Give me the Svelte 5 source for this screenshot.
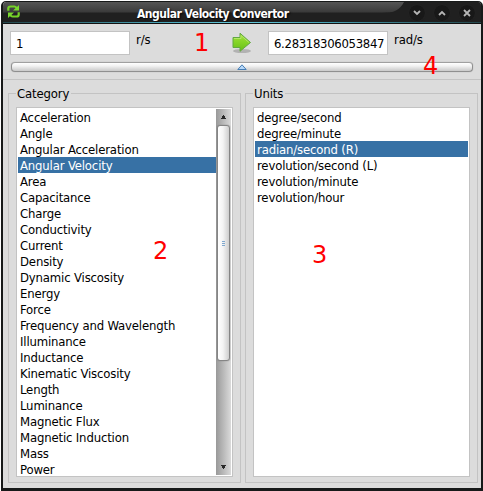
<script>
  const categories = ['Acceleration', 'Angle', 'Angular Acceleration', 'Angular Velocity', 'Area', 'Capacitance', 'Charge', 'Conductivity', 'Current', 'Density', 'Dynamic Viscosity', 'Energy', 'Force', 'Frequency and Wavelength', 'Illuminance', 'Inductance', 'Kinematic Viscosity', 'Length', 'Luminance', 'Magnetic Flux', 'Magnetic Induction', 'Mass', 'Power'];
  const units = ['degree/second', 'degree/minute', 'radian/second (R)', 'revolution/second (L)', 'revolution/minute', 'revolution/hour'];
  let category = $state('Angular Velocity');
  let unit = $state('radian/second (R)');
</script>

<div class="desktop">
  <main class="window">
    <header class="titlebar">
      <svg class="logo" width="13" height="13" viewBox="0 0 13 13" fill="none" stroke="#74d127" stroke-width="2.2">
        <path d="M1.3 5.8V3.6Q1.3 1.5 3.5 1.5H7.5Q9 1.5 9.5 3.3" />
        <path d="M6 5.5H12V0Z" fill="#79d82f" stroke="none" />
        <path d="M11.7 7.2V9.4Q11.7 11.5 9.5 11.5H5.5Q4 11.5 3.5 9.7" />
        <path d="M7 7.5H1V13Z" fill="#79d82f" stroke="none" />
      </svg>
      <h1>Angular Velocity Convertor</h1>
      <div class="controls">
        <svg class="shelf" width="100" height="20" viewBox="0 0 100 20"><path d="M22 0C18 8 12 11 0 11V20H100V0Z" fill="#202020" /></svg>
        <button aria-label="Minimize"><svg width="8" height="8" viewBox="0 0 8 8"><path d="M1 2L4 5L7 2" /></svg></button>
        <button aria-label="Maximize"><svg width="8" height="8" viewBox="0 0 8 8"><path d="M1 6L4 3L7 6" /></svg></button>
        <button aria-label="Close"><svg width="8" height="8" viewBox="0 0 8 8"><path d="M1 1L7 7M7 1L1 7" /></svg></button>
      </div>
    </header>

    <section class="converter">
      <div class="fields">
        <div class="field">1</div>
        <span class="suffix from">r/s</span>
        <span class="mark one">1</span>
        <svg class="arrow" width="22" height="22" viewBox="0 0 22 22">
          <defs><linearGradient id="green" x2="0" y2="1"><stop stop-color="#a7e23d" /><stop offset=".5" stop-color="#83d426" /><stop offset="1" stop-color="#69bd18" /></linearGradient></defs>
          <ellipse cx="11" cy="19" rx="9" ry="2" fill="#888" opacity=".5" />
          <path d="M2 5.5H9V1.2L19.5 10.5L9 19.3V15.5H2Z" fill="url(#green)" stroke="#62a842" stroke-linejoin="round" />
          <path d="M3 6.5H10V3.5L18 10.5" fill="none" stroke="#b5e766" />
        </svg>
        <div class="field result">6.28318306053847</div>
        <span class="suffix to">rad/s</span>
      </div>
      <div class="slider">
        <svg width="10" height="6" viewBox="0 0 10 6"><path d="M.8 5.5L5 .8L9.2 5.5Z" fill="#b7d8f8" stroke="#477eb5" /></svg>
        <span class="mark four">4</span>
      </div>
    </section>

    <section class="panels">
      <fieldset>
        <h2>Category</h2>
        <div class="list">
          <div class="rows">
            {#each categories as item}
              <button class="row" class:selected={item === category} onclick={() => (category = item)}>{item}</button>
            {/each}
          </div>
          <div class="scrollbar">
            <svg class="up" width="5" height="4" viewBox="0 0 5 4"><path d="M2 0H3V1H4V3H5V4H0V3H1V1H2Z" /></svg>
            <div class="thumb"><i></i><i></i><i></i></div>
            <svg class="down" width="5" height="4" viewBox="0 0 5 4"><path d="M0 0H5V1H4V3H3V4H2V3H1V1H0Z" /></svg>
          </div>
        </div>
        <span class="mark two">2</span>
      </fieldset>
      <fieldset>
        <h2>Units</h2>
        <div class="list units">
          <div class="rows">
            {#each units as item}
              <button class="row" class:selected={item === unit} onclick={() => (unit = item)}>{item}</button>
            {/each}
          </div>
        </div>
        <span class="mark three">3</span>
      </fieldset>
    </section>
  </main>
</div>

<style>
  * { box-sizing: border-box; }
  .desktop { width: 483px; height: 491px; padding: 1px 0 0 1px; background: #fff; overflow: hidden; font: 13px/17px "DejaVu Sans Condensed", "DejaVu Sans", sans-serif; font-stretch: condensed; letter-spacing: -.16px; color: #000; }
  .window { width: 482px; height: 490px; display: flex; flex-direction: column; border: 2px solid #171919; border-width: 1px 2px 3px; border-radius: 5px 5px 0 0; background: #dcdcdc; overflow: hidden; }
  .titlebar { height: 22px; flex: none; display: flex; align-items: center; position: relative; background: linear-gradient(#555, #3b3b3b 10px, #202020 11px, #202020 20px, #111 21px); }
  .titlebar::after { content: ""; position: absolute; left: 0; right: 0; top: 20px; height: 1px; background: linear-gradient(90deg, #25474c, #4aaabd 35%, #65cadb 50%, #4aaabd 65%, #25474c); }
  .logo { margin: -3px 0 0 4px; }
  h1 { margin: 1px 0 0 117px; width: 152px; font-size: 12px; font-weight: bold; line-height: 20px; color: #fff; text-shadow: 1px 1px 2px #000; white-space: nowrap; letter-spacing: -.49px; }
  .controls { position: relative; margin-left: auto; height: 22px; display: flex; gap: 9px; align-items: center; padding: 0 6px 0 0; }
  .shelf { position: absolute; right: -1px; top: 0; }
  .controls button { position: relative; width: 16px; height: 16px; border-radius: 50%; border: 0; padding: 0; display: grid; place-items: center; background: #181818; box-shadow: 0 0 1px #303030; }
  .controls button path { fill: none; stroke: #b5b5b5; stroke-width: 1.8; }
  .converter { height: 56px; flex: none; padding: 7px 8px 0 7px; border-bottom: 1px solid #c3c3c3; }
  .fields { height: 24px; display: flex; }
  .field { width: 120px; height: 24px; flex: none; background: #fff; border: 1px solid #c3c3c3; padding: 3px 5px; white-space: nowrap; overflow: hidden; letter-spacing: -.32px; }
  .suffix { padding-left: 6px; white-space: nowrap; }
  .from { width: 64px; }
  .mark { color: red; font: 24px/28px "DejaVu Sans", sans-serif; letter-spacing: 0; }
  .one { width: 29px; margin-top: -2px; }
  .arrow { margin: 1px 0 0 8px; }
  .result { margin-left: 15px; }
  .slider { position: relative; width: 462px; height: 10px; margin: 7px 0 0 1px; border: 1px solid #8f8f8f; border-top-color: #a0a0a0; border-radius: 4px; background: linear-gradient(#fff, #f3f3f3 35%, #c9c9c9); display: flex; justify-content: center; box-shadow: 0 0 1px #999; }
  .slider svg { margin-top: 1px; }
  .four { position: absolute; left: 411px; top: -11px; }
  .panels { display: flex; gap: 4px; padding: 13px 3px 6px 5px; flex: 1; min-height: 0; }
  fieldset { position: relative; margin: 0; width: 233px; height: 390px; min-width: 0; border: 1px solid #c3c3c3; padding: 13px 7px 5px; }
  h2 { position: absolute; top: -9px; left: 7px; margin: 0; padding: 0 2px 0 1px; background: #dcdcdc; font-size: 13px; line-height: 17px; font-weight: normal; }
  .list { width: 217px; height: 370px; display: flex; background: #fff; border: 1px solid #c3c3c3; padding: 1px 0 1px 1px; }
  .units { padding-right: 1px; }
  .rows { flex: 1; min-width: 0; }
  .row { display: block; width: 100%; height: 16px; padding: 1px 2px 0; border: 0; background: transparent; color: #000; font: inherit; line-height: 15px; font-stretch: condensed; letter-spacing: inherit; text-align: left; white-space: nowrap; }
  .row.selected { color: #fff; background: #3771a5; }
  .scrollbar { width: 16px; flex: none; border-right: 1px solid #fff; background: linear-gradient(90deg, #999, #dadada); display: flex; flex-direction: column; align-items: center; padding: 6px 0; }
  .up, .down { fill: #292929; flex: none; }
  .thumb { width: 13px; height: 236px; margin-top: 6px; flex: none; border: 1px solid #858585; border-radius: 3px; background: linear-gradient(90deg, #fff, #f4f4f4 45%, #cecece); box-shadow: 0 0 1px #666; display: flex; flex-direction: column; align-items: center; justify-content: center; gap: 1px; }
  .thumb i { width: 3px; height: 1px; background: #80a8ce; }
  .down { margin-top: auto; }
  .two, .three { position: absolute; top: 143px; left: 144px; }
  .three { top: 147px; left: 66px; }
</style>
